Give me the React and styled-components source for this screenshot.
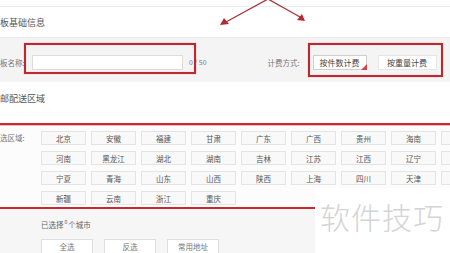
import React from 'react';
import styled, { createGlobalStyle } from 'styled-components';

const GlobalStyle = createGlobalStyle`
  html, body {
    margin: 0;
    padding: 0;
    background: #fff;
    overflow: hidden;
  }
  body {
    font-family: "Noto Sans CJK SC", "Noto Sans", sans-serif;
  }
`;

const Page = styled.div`
  position: relative;
  width: 450px;
  height: 253px;
  overflow: hidden;
  background: #fdfdfd;
  color: #666;
`;

const TopStrip = styled.div`
  height: 6px;
  background: #fff;
  border-bottom: 1px solid #ebebeb;
`;

const SectionHead = styled.div`
  height: ${(p) => p.h}px;
  display: flex;
  align-items: center;
  padding-bottom: ${(p) => p.pb || 0}px;
  box-sizing: border-box;
  font-size: 9px;
  color: #555;
  background: #fff;
  white-space: nowrap;
`;

const FormBand = styled.div`
  position: relative;
  height: 45px;
  display: flex;
  align-items: center;
  padding-top: 4px;
  box-sizing: border-box;
  background: #f4f4f4;
  border-top: 1px solid #ececec;
`;

const FieldLabel = styled.span`
  font-size: 7.5px;
  color: #777;
  white-space: nowrap;
  width: ${(p) => p.w}px;
  margin-left: ${(p) => p.ml || 0}px;
`;

const TextInput = styled.div`
  width: 151px;
  height: 15px;
  box-sizing: border-box;
  background: #fff;
  border: 1px solid #dcdcdc;
`;

const Counter = styled.span`
  margin-left: 6px;
  font-size: 7px;
  color: #777;
  white-space: nowrap;
`;

const ModeGroup = styled.div`
  display: flex;
  gap: 11px;
  margin-left: 13px;
`;

const ModeButton = styled.div`
  position: relative;
  width: ${(p) => p.w}px;
  height: 15px;
  box-sizing: border-box;
  display: flex;
  align-items: center;
  justify-content: center;
  font-size: 8px;
  color: #444;
  background: #fff;
  border: 1px solid ${(p) => (p.active ? '#cfcfcf' : '#e6e6e6')};
  white-space: nowrap;

  &::after {
    content: '';
    display: ${(p) => (p.active ? 'block' : 'none')};
    position: absolute;
    right: -1px;
    bottom: -1px;
    border-style: solid;
    border-width: 0 0 6px 6px;
    border-color: transparent transparent #d3454b transparent;
  }
`;

const Callout = styled.div`
  position: absolute;
  left: ${(p) => p.x}px;
  top: ${(p) => p.y}px;
  width: ${(p) => p.w}px;
  height: ${(p) => p.h}px;
  box-sizing: border-box;
  border: 2px solid #c1272e;
  box-shadow: 0 0 1px rgba(193, 39, 46, 0.5), inset 0 0 1px rgba(193, 39, 46, 0.4);
  pointer-events: none;
`;

const RegionBox = styled.div`
  border-top: 2px solid #c42a31;
  border-bottom: 2px solid #c42a31;
  box-shadow: inset 0 1px 0 #eeb7b9;
  padding: 6px 0 2px;
  background: #fcfcfc;
  display: flex;
`;

const RegionLabel = styled.div`
  width: 41px;
  flex: none;
  font-size: 7.5px;
  color: #777;
  white-space: nowrap;
  padding-top: 1px;
`;

const RegionGrid = styled.div`
  display: grid;
  grid-template-columns: repeat(9, 45px);
  grid-auto-rows: 14px;
  column-gap: 5px;
  row-gap: 6px;
`;

const RegionCell = styled.div`
  box-sizing: border-box;
  border: 1px solid #e4e4e4;
  background: #f9f9f9;
  display: flex;
  align-items: center;
  justify-content: center;
  font-size: 7.5px;
  color: #555;
  white-space: nowrap;
`;

const Footer = styled.div`
  height: 46px;
  background: #f6f6f6;
  padding-left: 41px;
  display: flex;
  flex-direction: column;
`;

const SelectedText = styled.div`
  margin-top: 9px;
  font-size: 7.5px;
  color: #666;
  white-space: nowrap;

  sup {
    font-size: 5px;
    margin: 0 1px;
  }
`;

const ActionRow = styled.div`
  display: flex;
  gap: 11px;
  margin-top: 9px;
`;

const ActionButton = styled.div`
  width: 52px;
  height: 16px;
  box-sizing: border-box;
  border: 1px solid #dedede;
  background: #fff;
  display: flex;
  align-items: center;
  justify-content: center;
  font-size: 7.5px;
  color: #777;
`;

const Watermark = styled.div`
  position: absolute;
  right: 0;
  bottom: 0;
  width: 135px;
  height: 65px;
  background: #fff;
  display: flex;
  align-items: center;
  padding-left: 5px;
  box-sizing: border-box;
  font-size: 30px;
  font-weight: 300;
  letter-spacing: 1px;
  color: #d4d4d4;
  white-space: nowrap;
  padding-bottom: 10px;
`;

const ArrowLayer = styled.svg`
  position: absolute;
  left: 0;
  top: 0;
  pointer-events: none;
`;

// the ninth column is cut off at the right edge, so its cells show no name
const regions = [
  ['北京', '安徽', '福建', '甘肃', '广东', '广西', '贵州', '海南', ''],
  ['河南', '黑龙江', '湖北', '湖南', '吉林', '江苏', '江西', '辽宁', ''],
  ['宁夏', '青海', '山东', '山西', '陕西', '上海', '四川', '天津', ''],
  ['新疆', '云南', '浙江', '重庆'],
];

export default function App() {
  return (
    <>
      <GlobalStyle />
      <Page>
        <TopStrip />
        <SectionHead h={30}>板基础信息</SectionHead>
        <FormBand>
          <FieldLabel w={32}>板名称:</FieldLabel>
          <TextInput />
          <Counter>0 / 50</Counter>
          <FieldLabel ml={61} w={32}>计费方式:</FieldLabel>
          <ModeGroup>
            <ModeButton active w={54}>按件数计费</ModeButton>
            <ModeButton w={59}>按重量计费</ModeButton>
          </ModeGroup>
          <Callout x={24} y={5} w={172} h={31} />
          <Callout x={308} y={5} w={135} h={34} />
        </FormBand>
        <SectionHead h={41} pb={8}>邮配送区域</SectionHead>
        <RegionBox>
          <RegionLabel>选区域:</RegionLabel>
          <RegionGrid>
            {regions.flat().map((name, i) => (
              <RegionCell key={i}>{name}</RegionCell>
            ))}
          </RegionGrid>
        </RegionBox>
        <Footer>
          <SelectedText>
            已选择<sup>0</sup>个城市
          </SelectedText>
          <ActionRow>
            <ActionButton>全选</ActionButton>
            <ActionButton>反选</ActionButton>
            <ActionButton>常用地址</ActionButton>
          </ActionRow>
        </Footer>
        <Watermark>软件技巧</Watermark>
        <ArrowLayer width="450" height="40" viewBox="0 0 450 40">
          <g stroke="#a9343a" strokeWidth="1.3" fill="none">
            <line x1="268" y1="-1" x2="226" y2="22" />
            <line x1="268" y1="-1" x2="300" y2="17" />
          </g>
          <polygon points="220,25 224,18 229,24" fill="#b32a32" />
          <polygon points="305,21 297,20 302,14" fill="#b32a32" />
        </ArrowLayer>
      </Page>
    </>
  );
}
